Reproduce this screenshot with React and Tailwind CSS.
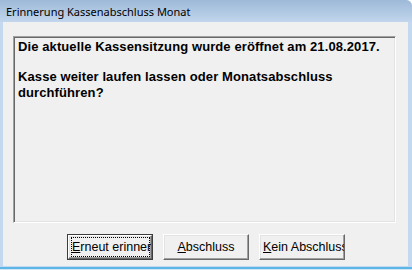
import React from "react";

function Button({ children, isDefault, align = "center" }) {
  return (
    <div
      className={
        "relative w-[86px] h-[26px] bg-[#f0f0f0] " +
        (isDefault ? "border border-[#3c3c3c]" : "")
      }
    >
      <div className="h-full w-full border-t border-l border-white border-r border-b border-r-[#696969] border-b-[#696969] shadow-[inset_-1px_-1px_0_#a0a0a0,inset_1px_1px_0_#e3e3e3] overflow-hidden">
        <div
          className={
            "h-full flex items-center whitespace-nowrap text-[12.5px] text-black px-[3px] " +
            (align === "left" ? "justify-start" : "justify-center")
          }
          style={{ fontFamily: '"Liberation Sans", Arial, sans-serif' }}
        >
          {children}
        </div>
      </div>
      {isDefault && (
        <div className="absolute left-[3px] right-[2px] top-[2px] bottom-[2px] border border-dotted border-black pointer-events-none" />
      )}
    </div>
  );
}

export default function App() {
  return (
    <div className="w-[412px] h-[270px] flex flex-col bg-[#c4d9ef] rounded-tr-[6px] overflow-hidden">
      <div className="h-[22px] shrink-0 flex items-center pl-[6px] bg-gradient-to-b from-[#9db9d8] to-[#c2d6ed]">
        <span
          className="text-[11px] text-black leading-none"
          style={{ fontFamily: '"Noto Sans", "Open Sans", sans-serif' }}
        >
          Erinnerung Kassenabschluss Monat
        </span>
      </div>
      <div className="flex-1 flex flex-col ml-[3px] mr-[4px] bg-[#f0f0f0]">
        <div className="mt-[14px] ml-[10px] mr-[12px] h-[187px] border-t border-l border-[#a0a0a0] border-r border-b border-r-white border-b-white shadow-[inset_1px_1px_0_#696969,inset_-1px_-1px_0_#e3e3e3] pt-[2px] pl-[4px]">
          <div
            className="text-[13px] font-bold leading-[16px] tracking-[0.1px] text-black"
            style={{ fontFamily: '"Liberation Sans", Arial, sans-serif' }}
          >
            <p>Die aktuelle Kassensitzung wurde eröffnet am 21.08.2017.</p>
            <div className="h-[14px]" />
            <p>Kasse weiter laufen lassen oder Monatsabschluss</p>
            <p>durchführen?</p>
          </div>
        </div>
        <div className="mt-[11px] ml-[64px] flex gap-[10px]">
          <Button isDefault align="left">
            <span>
              <span className="underline">E</span>rneut erinnern
            </span>
          </Button>
          <Button>
            <span>
              <span className="underline">A</span>bschluss
            </span>
          </Button>
          <Button align="left">
            <span>
              <span className="underline">K</span>ein Abschluss
            </span>
          </Button>
        </div>
      </div>
      <div className="h-[4px] shrink-0 flex flex-col">
        <div className="h-[1px] bg-[#c4d9ef]" />
        <div className="h-[2px] bg-[#5db7e6]" />
        <div className="h-[1px] bg-[#d4e6f6]" />
      </div>
    </div>
  );
}
